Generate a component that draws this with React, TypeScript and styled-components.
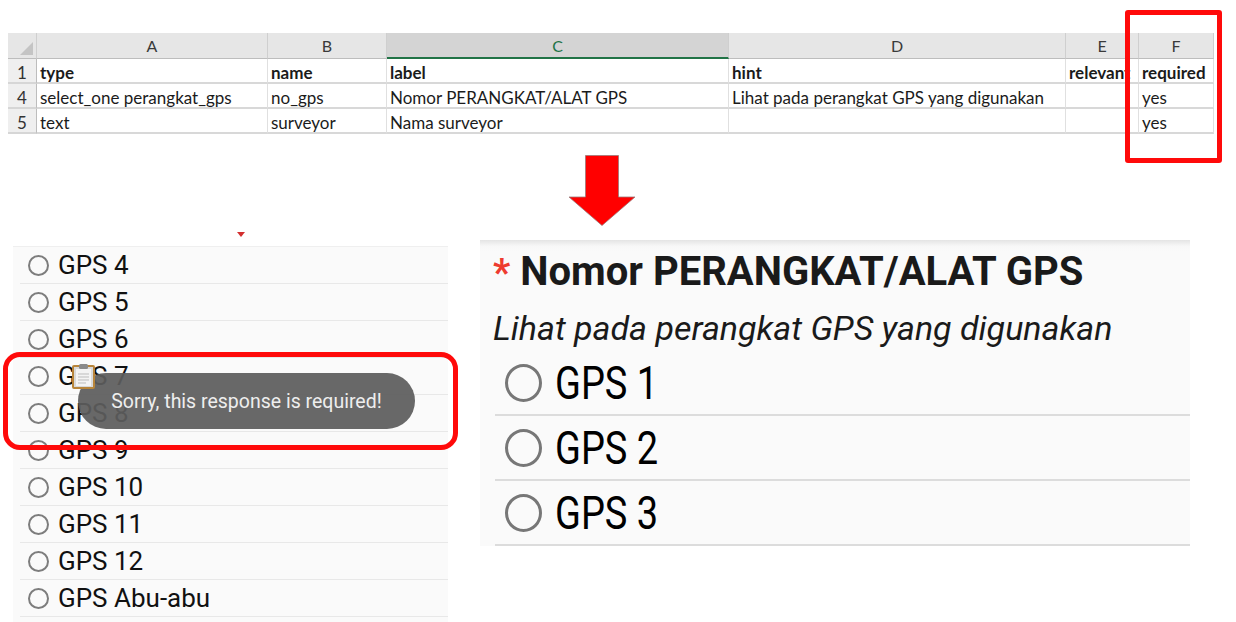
import React from "react";
import styled, { createGlobalStyle } from "styled-components";

const Global = createGlobalStyle`
  html, body { margin: 0; padding: 0; background: #ffffff; }
  body { width: 1236px; height: 622px; overflow: hidden; }
`;

const Page = styled.div`
  position: relative;
  width: 1236px;
  height: 622px;
  overflow: hidden;
  background: #ffffff;
  font-family: Roboto, "Noto Sans", sans-serif;
`;

/* ---------- spreadsheet ---------- */
const SheetWrap = styled.div`
  padding: 33px 0 0 8px;
`;

const Sheet = styled.div`
  display: grid;
  grid-template-columns: 29px 231px 119px 342px 337px 73px 75px;
  grid-template-rows: 26px 25px 25px 25px;
  width: 1206px;
  font-family: Lato, "Open Sans", sans-serif;
  font-size: 17px;
  color: #1b1b1b;
`;

const Corner = styled.div`
  position: relative;
  background: #e6e6e6;
  border-right: 1px solid #cfcfcf;
  border-bottom: 1px solid #bdbdbd;
  box-sizing: border-box;
  &::after {
    content: "";
    position: absolute;
    right: 3px;
    bottom: 3px;
    width: 0;
    height: 0;
    border-left: 13px solid transparent;
    border-bottom: 13px solid #c4c4c4;
  }
`;

const ColHead = styled.div<{ $selected?: boolean }>`
  box-sizing: border-box;
  background: ${(p) => (p.$selected ? "#d4d4d4" : "#e6e6e6")};
  border-right: 1px solid #cfcfcf;
  border-bottom: ${(p) => (p.$selected ? "2px solid #217346" : "1px solid #bdbdbd")};
  color: ${(p) => (p.$selected ? "#217346" : "#3a3a3a")};
  font-size: 16px;
  line-height: 25px;
  text-align: center;
`;

const RowHead = styled.div`
  box-sizing: border-box;
  background: #efefef;
  border-right: 1px solid #bdbdbd;
  border-bottom: 2px solid #d6d6d6;
  color: #333;
  font-size: 17px;
  line-height: 24px;
  padding-top: 2px;
  text-align: center;
`;

const Cell = styled.div<{ $bold?: boolean; $overflow?: boolean }>`
  box-sizing: border-box;
  background: #ffffff;
  border-right: 1px solid #e0e0e0;
  border-bottom: 2px solid #d8d8d8;
  padding: 2px 3px 0;
  line-height: 23px;
  white-space: nowrap;
  overflow: ${(p) => (p.$overflow ? "visible" : "hidden")};
  font-weight: ${(p) => (p.$bold ? 700 : 400)};
`;

/* ---------- arrow ---------- */
const ArrowRow = styled.div`
  padding: 21px 0 0 568px;
  height: 70px;
`;

/* ---------- bottom screenshots ---------- */
const Bottom = styled.div`
  position: relative;
  display: flex;
  align-items: flex-start;
  gap: 32px;
  padding: 15px 0 0 13px;
`;

const LeftPanel = styled.div`
  position: relative;
  margin-top: 6px;
  width: 435px;
  height: 380px;
  background: #fafafa;
  border-top: 1px solid #efefef;
  overflow: hidden;
`;

const SmallRow = styled.div`
  box-sizing: border-box;
  display: flex;
  align-items: center;
  height: 37px;
  margin-left: 7px;
  padding-left: 8px;
  border-bottom: 1px solid #e8e8e8;
`;

const SmallRadio = styled.span`
  box-sizing: border-box;
  width: 21px;
  height: 21px;
  border: 2px solid #7d7d7d;
  border-radius: 50%;
  margin-right: 9px;
  flex: none;
`;

const SmallLabel = styled.span`
  font-size: 26px;
  color: #111;
  line-height: 30px;
`;

const Toast = styled.div`
  position: absolute;
  left: 65px;
  top: 126px;
  width: 337px;
  height: 56px;
  border-radius: 28px;
  background: rgba(92, 92, 92, 0.93);
  color: #eeeeee;
  font-size: 19.5px;
  display: flex;
  align-items: center;
  justify-content: center;
`;

const ClipIcon = styled.svg`
  position: absolute;
  left: 59px;
  top: 116px;
`;

const RedFrame = styled.div`
  position: absolute;
  left: 3px;
  top: 127px;
  width: 455px;
  height: 98px;
  box-sizing: border-box;
  border: 5px solid #ff0a0a;
  border-radius: 17px;
  pointer-events: none;
`;

const ClippedMark = styled.div`
  position: absolute;
  left: 237px;
  top: 7px;
  width: 0;
  height: 0;
  border-left: 4px solid transparent;
  border-right: 4px solid transparent;
  border-top: 5px solid #d32f2f;
`;

const RightPanel = styled.div`
  box-sizing: border-box;
  width: 710px;
  padding: 8px 0 0 13px;
  background: linear-gradient(#e4e4e4, #f7f7f7 6px, #fafafa 12px);
`;

const Title = styled.div`
  display: flex;
  align-items: center;
  height: 46px;
  font-size: 40px;
  font-weight: 700;
  color: #1a1a1a;
  white-space: nowrap;
`;

const Star = styled.span`
  color: #ee3b2f;
  font-size: 38px;
  margin-right: 10px;
  position: relative;
  top: 2px;
`;

const Hint = styled.div`
  height: 46px;
  margin-top: 11px;
  line-height: 46px;
  font-size: 34px;
  font-style: italic;
  color: #1a1a1a;
  white-space: nowrap;
`;

const OptionRow = styled.div`
  box-sizing: border-box;
  display: flex;
  align-items: center;
  height: 65px;
  margin-left: 2px;
  padding-left: 10px;
  border-bottom: 2px solid #dcdcdc;
`;

const BigRadio = styled.span`
  box-sizing: border-box;
  width: 37px;
  height: 38px;
  border: 3px solid #777777;
  border-radius: 50%;
  margin-right: 13px;
  flex: none;
`;

const BigLabel = styled.span`
  display: inline-block;
  font-size: 38px;
  line-height: 40px;
  color: #000;
  transform: scaleY(1.2);
`;

const HighlightF = styled.div`
  position: absolute;
  left: 1125px;
  top: 10px;
  width: 97px;
  height: 153px;
  box-sizing: border-box;
  border: 5px solid #ff0a0a;
  border-radius: 3px;
  pointer-events: none;
`;

const headers = ["A", "B", "C", "D", "E", "F"];
const rows: { n: string; bold?: boolean; cells: string[] }[] = [
  { n: "1", bold: true, cells: ["type", "name", "label", "hint", "relevant", "required"] },
  {
    n: "4",
    cells: [
      "select_one perangkat_gps",
      "no_gps",
      "Nomor PERANGKAT/ALAT GPS",
      "Lihat pada perangkat GPS yang digunakan",
      "",
      "yes",
    ],
  },
  { n: "5", cells: ["text", "surveyor", "Nama surveyor", "", "", "yes"] },
];

const leftOptions = [
  "GPS 4",
  "GPS 5",
  "GPS 6",
  "GPS 7",
  "GPS 8",
  "GPS 9",
  "GPS 10",
  "GPS 11",
  "GPS 12",
  "GPS Abu-abu",
];

export default function App() {
  return (
    <Page>
      <Global />
      <SheetWrap>
        <Sheet>
          <Corner />
          {headers.map((h) => (
            <ColHead key={h} $selected={h === "C"}>
              {h}
            </ColHead>
          ))}
          {rows.map((r) => (
            <React.Fragment key={r.n}>
              <RowHead>{r.n}</RowHead>
              {r.cells.map((c, i) => (
                <Cell key={i} $bold={r.bold} $overflow={i === 4}>
                  {c}
                </Cell>
              ))}
            </React.Fragment>
          ))}
        </Sheet>
      </SheetWrap>

      <ArrowRow>
        <svg width="68" height="71" viewBox="0 0 68 71">
          <polygon
            points="17.5,0.5 50.5,0.5 50.5,42 67,42 34,70.5 1,42 17.5,42"
            fill="#ff0000"
            stroke="#9a7a7a"
            strokeWidth="0.8"
          />
        </svg>
      </ArrowRow>

      <Bottom>
        <ClippedMark />
        <LeftPanel>
          {leftOptions.map((o) => (
            <SmallRow key={o}>
              <SmallRadio />
              <SmallLabel>{o}</SmallLabel>
            </SmallRow>
          ))}
          <Toast>Sorry, this response is required!</Toast>
          <ClipIcon width="24" height="26" viewBox="0 0 24 26">
            <rect x="1" y="3" width="21" height="22" rx="1" fill="#d9d9d9" stroke="#b8853a" strokeWidth="2" />
            <rect x="4" y="6" width="15" height="17" fill="#f4f4f4" />
            <rect x="7" y="1" width="9" height="5" rx="1.5" fill="#8a8a8a" />
            <line x1="6" y1="11" x2="17" y2="11" stroke="#bdbdbd" strokeWidth="1" />
            <line x1="6" y1="14" x2="17" y2="14" stroke="#bdbdbd" strokeWidth="1" />
            <line x1="6" y1="17" x2="17" y2="17" stroke="#bdbdbd" strokeWidth="1" />
            <line x1="6" y1="20" x2="14" y2="20" stroke="#bdbdbd" strokeWidth="1" />
          </ClipIcon>
        </LeftPanel>
        <RedFrame />

        <RightPanel>
          <Title>
            <Star>*</Star>
            Nomor PERANGKAT/ALAT GPS
          </Title>
          <Hint>Lihat pada perangkat GPS yang digunakan</Hint>
          {["GPS 1", "GPS 2", "GPS 3"].map((o) => (
            <OptionRow key={o}>
              <BigRadio />
              <BigLabel>{o}</BigLabel>
            </OptionRow>
          ))}
        </RightPanel>
      </Bottom>

      <HighlightF />
    </Page>
  );
}
